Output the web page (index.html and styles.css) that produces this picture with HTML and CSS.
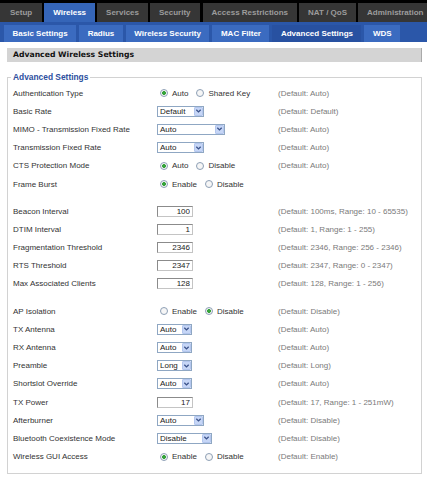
FILE: index.html
```html
<html>
<head>
    <title>Wireless - Advanced Settings</title>
    <link rel="stylesheet" href="styles.css">
</head>
<body>
    <div class="tabs">
        <div class="tab">Setup</div>
        <div class="tab tab-on">Wireless</div>
        <div class="tab">Services</div>
        <div class="tab">Security</div>
        <div class="tab">Access Restrictions</div>
        <div class="tab">NAT / QoS</div>
        <div class="tab">Administration</div>
    </div>
    <div class="subtabs">
        <div class="sub">Basic Settings</div>
        <div class="sub">Radius</div>
        <div class="sub">Wireless Security</div>
        <div class="sub">MAC Filter</div>
        <div class="sub sub-on">Advanced Settings</div>
        <div class="sub">WDS</div>
    </div>

    <div class="main">
        <h2 class="bar">Advanced Wireless Settings</h2>
        <fieldset>
            <legend>Advanced Settings</legend>

            <div class="row">
                <div>Authentication Type</div>
                <div><label class="rad"><input type="radio" name="auth" checked>Auto</label><label class="rad"><input type="radio" name="auth">Shared Key</label></div>
                <div class="def">(Default: Auto)</div>
            </div>
            <div class="row">
                <div>Basic Rate</div>
                <div><span class="sel w47"><span class="val">Default</span><span class="arr"><svg width="8" height="8" viewBox="0 0 8 8"><polyline points="1.5,2.5 4,5 6.5,2.5" fill="none" stroke="#3b528a" stroke-width="1.5"/></svg></span></span></div>
                <div class="def">(Default: Default)</div>
            </div>
            <div class="row">
                <div>MIMO - Transmission Fixed Rate</div>
                <div><span class="sel w68"><span class="val">Auto</span><span class="arr"><svg width="8" height="8" viewBox="0 0 8 8"><polyline points="1.5,2.5 4,5 6.5,2.5" fill="none" stroke="#3b528a" stroke-width="1.5"/></svg></span></span></div>
                <div class="def">(Default: Auto)</div>
            </div>
            <div class="row">
                <div>Transmission Fixed Rate</div>
                <div><span class="sel w47"><span class="val">Auto</span><span class="arr"><svg width="8" height="8" viewBox="0 0 8 8"><polyline points="1.5,2.5 4,5 6.5,2.5" fill="none" stroke="#3b528a" stroke-width="1.5"/></svg></span></span></div>
                <div class="def">(Default: Auto)</div>
            </div>
            <div class="row">
                <div>CTS Protection Mode</div>
                <div><label class="rad"><input type="radio" name="cts" checked>Auto</label><label class="rad"><input type="radio" name="cts">Disable</label></div>
                <div class="def">(Default: Auto)</div>
            </div>
            <div class="row">
                <div>Frame Burst</div>
                <div><label class="rad"><input type="radio" name="burst" checked>Enable</label><label class="rad"><input type="radio" name="burst">Disable</label></div>
                <div class="def"></div>
            </div>

            <div class="gap"></div>

            <div class="row">
                <div>Beacon Interval</div>
                <div><input class="num" value="100"></div>
                <div class="def">(Default: 100ms, Range: 10 - 65535)</div>
            </div>
            <div class="row">
                <div>DTIM Interval</div>
                <div><input class="num" value="1"></div>
                <div class="def">(Default: 1, Range: 1 - 255)</div>
            </div>
            <div class="row">
                <div>Fragmentation Threshold</div>
                <div><input class="num" value="2346"></div>
                <div class="def">(Default: 2346, Range: 256 - 2346)</div>
            </div>
            <div class="row">
                <div>RTS Threshold</div>
                <div><input class="num" value="2347"></div>
                <div class="def">(Default: 2347, Range: 0 - 2347)</div>
            </div>
            <div class="row">
                <div>Max Associated Clients</div>
                <div><input class="num" value="128"></div>
                <div class="def">(Default: 128, Range: 1 - 256)</div>
            </div>

            <div class="gap"></div>

            <div class="row">
                <div>AP Isolation</div>
                <div><label class="rad"><input type="radio" name="ap">Enable</label><label class="rad"><input type="radio" name="ap" checked>Disable</label></div>
                <div class="def">(Default: Disable)</div>
            </div>
            <div class="row">
                <div>TX Antenna</div>
                <div><span class="sel w35"><span class="val">Auto</span><span class="arr"><svg width="8" height="8" viewBox="0 0 8 8"><polyline points="1.5,2.5 4,5 6.5,2.5" fill="none" stroke="#3b528a" stroke-width="1.5"/></svg></span></span></div>
                <div class="def">(Default: Auto)</div>
            </div>
            <div class="row">
                <div>RX Antenna</div>
                <div><span class="sel w35"><span class="val">Auto</span><span class="arr"><svg width="8" height="8" viewBox="0 0 8 8"><polyline points="1.5,2.5 4,5 6.5,2.5" fill="none" stroke="#3b528a" stroke-width="1.5"/></svg></span></span></div>
                <div class="def">(Default: Auto)</div>
            </div>
            <div class="row">
                <div>Preamble</div>
                <div><span class="sel w35"><span class="val">Long</span><span class="arr"><svg width="8" height="8" viewBox="0 0 8 8"><polyline points="1.5,2.5 4,5 6.5,2.5" fill="none" stroke="#3b528a" stroke-width="1.5"/></svg></span></span></div>
                <div class="def">(Default: Long)</div>
            </div>
            <div class="row">
                <div>Shortslot Override</div>
                <div><span class="sel w35"><span class="val">Auto</span><span class="arr"><svg width="8" height="8" viewBox="0 0 8 8"><polyline points="1.5,2.5 4,5 6.5,2.5" fill="none" stroke="#3b528a" stroke-width="1.5"/></svg></span></span></div>
                <div class="def">(Default: Auto)</div>
            </div>
            <div class="row">
                <div>TX Power</div>
                <div><input class="num" value="17"></div>
                <div class="def">(Default: 17, Range: 1 - 251mW)</div>
            </div>
            <div class="row">
                <div>Afterburner</div>
                <div><span class="sel w47"><span class="val">Auto</span><span class="arr"><svg width="8" height="8" viewBox="0 0 8 8"><polyline points="1.5,2.5 4,5 6.5,2.5" fill="none" stroke="#3b528a" stroke-width="1.5"/></svg></span></span></div>
                <div class="def">(Default: Disable)</div>
            </div>
            <div class="row">
                <div>Bluetooth Coexistence Mode</div>
                <div><span class="sel w55"><span class="val">Disable</span><span class="arr"><svg width="8" height="8" viewBox="0 0 8 8"><polyline points="1.5,2.5 4,5 6.5,2.5" fill="none" stroke="#3b528a" stroke-width="1.5"/></svg></span></span></div>
                <div class="def">(Default: Disable)</div>
            </div>
            <div class="row">
                <div>Wireless GUI Access</div>
                <div><label class="rad"><input type="radio" name="gui" checked>Enable</label><label class="rad"><input type="radio" name="gui">Disable</label></div>
                <div class="def">(Default: Enable)</div>
            </div>
        </fieldset>
    </div>
</body>
</html>
```

FILE: styles.css
```css
* { margin: 0; padding: 0; box-sizing: border-box; }
body { font-family: "Liberation Sans", Arial, sans-serif; font-size: 8px; color: #333; background: #fff; }

/* top menu */
.tabs { background: #000; height: 22px; padding-top: 3px; display: flex; gap: 2px; overflow: hidden; }
.tab { background: #363636; color: #9c9c9c; font-weight: bold; padding: 0 9px; line-height: 19px; white-space: nowrap; flex-shrink: 0; }
.tab:first-child { padding: 0 10px; }
.tab:nth-child(5) { margin-left: 1px; }
.tab-on { background: #3565b8; color: #fff; }

.subtabs { background: #2b57a9; height: 20px; padding: 3px 0 0 4px; display: flex; gap: 3px; }
.sub { background: #3b6bc0; color: #fff; font-weight: bold; padding: 0 8.5px; line-height: 17px; white-space: nowrap; }
.sub-on { background: #2851a1; }

/* content */
.main { padding: 6px 5px 0 7px; }
.bar { font: bold 7.7px "DejaVu Sans", Verdana, sans-serif; background: #d4d4d4; color: #111; height: 14px; line-height: 14px; padding-left: 6px; border-right: 1px solid #aaa; }

fieldset { margin-top: 10px; border: 1px solid #d2d2d2; padding: 2px 5px 7px 5px; }
legend { color: #2d4f9e; font-weight: bold; font-size: 8.4px; line-height: 10px; padding: 0 2px; margin-left: -2px; }

.row { display: grid; grid-template-columns: 144px 121px 1fr; align-items: center; height: 18.2px; white-space: nowrap; }
.gap { height: 9px; }
.def { color: #7a7a7a; }

/* radios */
.rad { display: inline-flex; align-items: center; margin-right: 5px; }
.rad input { appearance: none; width: 8px; height: 8px; border: 1px solid #8d9fb5; border-radius: 50%; background: #f6f6f6; margin: 0 4px 0 3px; }
.rad input:checked { background: radial-gradient(circle, #35a33a 0 1.7px, #f6f6f6 2.2px); }

/* drop-downs */
.sel { display: inline-flex; align-items: center; height: 11px; border: 1px solid #8fa7c3; background: #fff; color: #222; vertical-align: middle; }
.val { flex: 1; padding-left: 2px; line-height: 9px; }
.arr { width: 9px; height: 9px; background: #c6d6f6; border: 1px solid #b3c6ee; border-radius: 1px; display: flex; align-items: center; justify-content: center; }
.w35 { width: 35px; }
.w47 { width: 47px; }
.w55 { width: 55px; }
.w68 { width: 68px; }

/* number fields */
.num { width: 36px; height: 11px; border: 1px solid #8b8b8b; border-right-color: #c4c4c4; border-bottom-color: #c4c4c4; font: inherit; color: #222; text-align: right; padding: 0 2px; vertical-align: middle; }
```
